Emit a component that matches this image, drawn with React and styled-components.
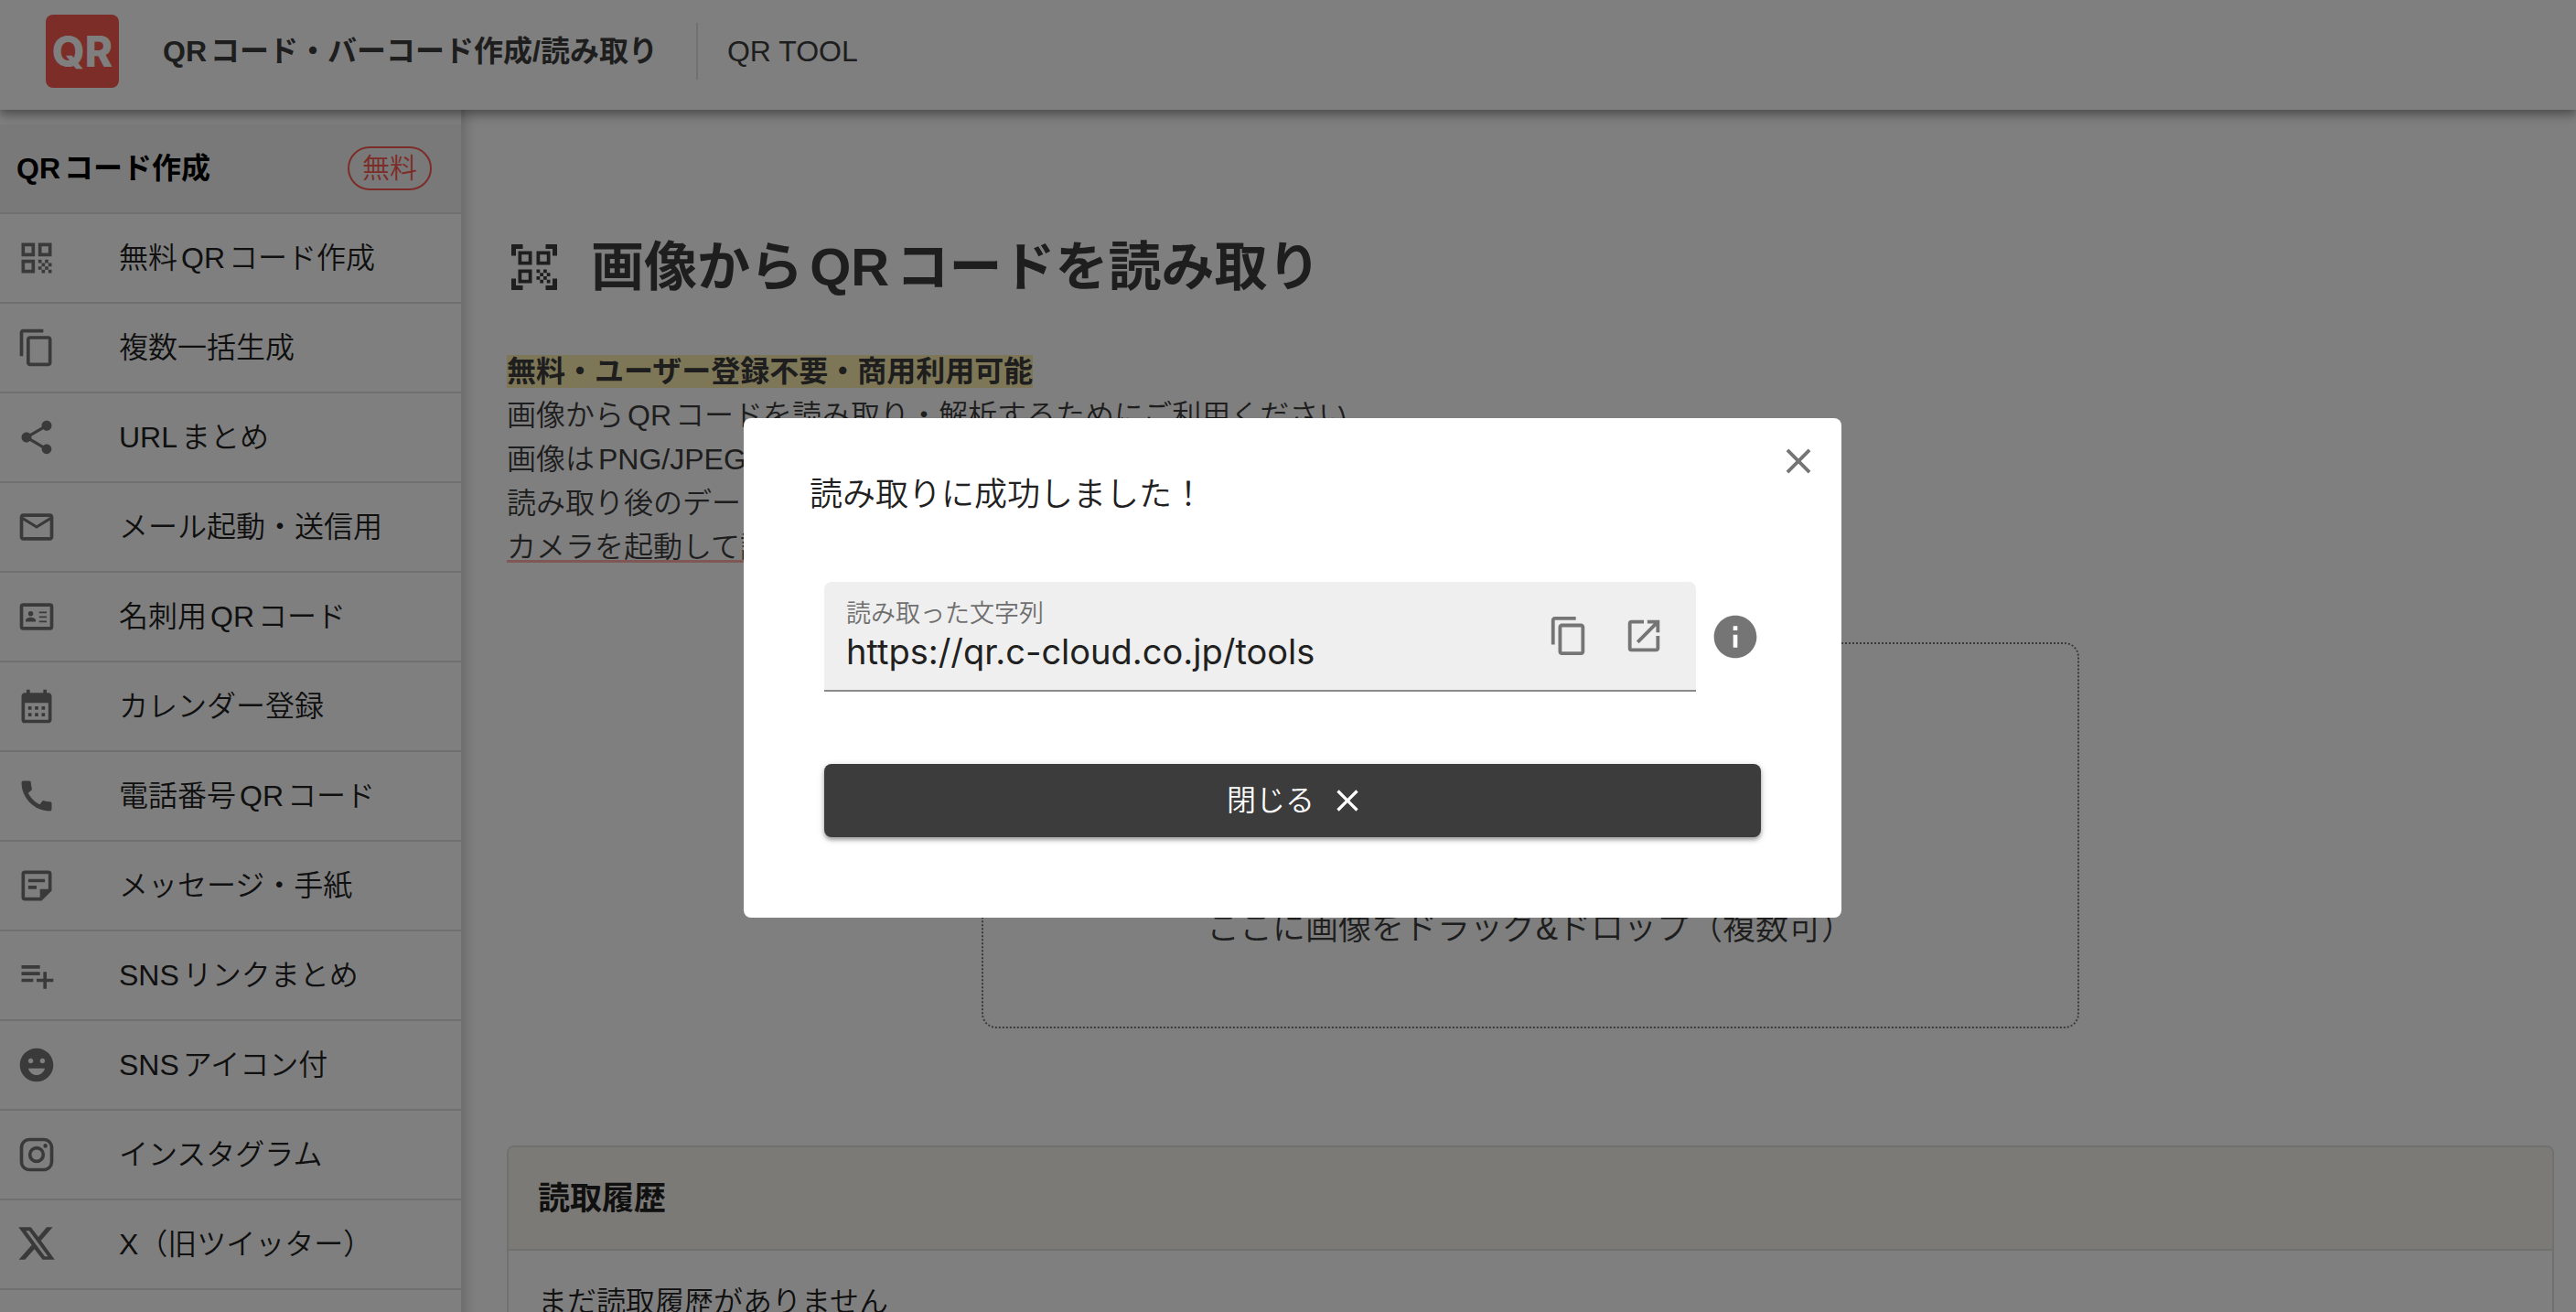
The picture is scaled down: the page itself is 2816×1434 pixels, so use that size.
import { useState } from 'react';
import styled, { createGlobalStyle } from 'styled-components';
import {
  MdCalendarMonth,
  MdCall,
  MdClose,
  MdContentCopy,
  MdEmojiEmotions,
  MdInfo,
  MdMailOutline,
  MdOpenInNew,
  MdPlaylistAdd,
  MdQrCode,
  MdQrCodeScanner,
  MdShare,
} from 'react-icons/md';

const colors = {
  text: '#3c3c3c',
  strong: '#212121',
  icon: '#757575',
  border: '#e0e0e0',
  red: '#fa5a50',
};

const GlobalStyle = createGlobalStyle`
  *, *::before, *::after {
    box-sizing: border-box;
  }

  body {
    margin: 0;
    overflow: hidden;
    background: #fff;
    color: ${colors.text};
    font-family: 'Liberation Sans', 'Noto Sans CJK JP', sans-serif;
    font-size: 32px;
    font-weight: 350;
    line-height: 48px;
    text-autospace: normal;
  }

  button, input {
    font: inherit;
    color: inherit;
  }
`;

const Header = styled.header`
  position: relative;
  z-index: 2;
  display: flex;
  align-items: center;
  height: 120px;
  padding: 0 50px 8px;
  background: #fff;
  box-shadow: 0 4px 8px rgba(0, 0, 0, 0.2), 0 8px 10px rgba(0, 0, 0, 0.14), 0 2px 20px rgba(0, 0, 0, 0.12);
`;

const Logo = styled.a`
  display: flex;
  align-items: center;
  justify-content: center;
  width: 80px;
  height: 80px;
  margin-right: 48px;
  border-radius: 8px;
  background: ${colors.red};
  color: #fff;
  font-family: Inter, sans-serif;
  font-size: 46px;
  font-weight: 800;
  text-decoration: none;
`;

const SiteName = styled.span`
  font-weight: 600;
`;

const SiteSub = styled.span`
  margin-left: 42px;
  padding-left: 32px;
  border-left: 2px solid ${colors.border};
  line-height: 62px;
`;

const Layout = styled.div`
  display: flex;
  align-items: stretch;
`;

const Sidebar = styled.nav`
  position: relative;
  flex: 0 0 508px;
  padding-top: 16px;
  border-right: 4px solid ${colors.border};
  color: ${colors.strong};
  box-shadow: 2px 0 12px rgba(0, 0, 0, 0.16);
`;

const SidebarHeading = styled.div`
  display: flex;
  align-items: center;
  justify-content: space-between;
  height: 98px;
  padding: 0 32px 0 18px;
  border-bottom: 2px solid ${colors.border};
  background: #f3f3f3;
  color: #000;
  font-weight: 600;
`;

const Chip = styled.span`
  padding: 0 14px;
  border: 2px solid ${colors.red};
  border-radius: 24px;
  color: ${colors.red};
  font-size: 30px;
  font-weight: 350;
  line-height: 44px;
`;

const Menu = styled.ul`
  margin: 0;
  padding: 0;
  list-style: none;
`;

const MenuLink = styled.a`
  display: flex;
  align-items: center;
  gap: 68px;
  height: 98px;
  padding: 0 18px;
  border-bottom: 2px solid ${colors.border};
  color: inherit;
  text-decoration: none;

  svg {
    flex: none;
    width: 44px;
    height: 44px;
    color: ${colors.icon};
  }
`;

const Main = styled.main`
  flex: 1;
  min-width: 0;
  padding: 130px 24px 48px 46px;
`;

const Title = styled.h1`
  display: flex;
  align-items: center;
  gap: 32px;
  margin: 0 0 48px;
  font-size: 58px;
  font-weight: 600;
  line-height: 84px;

  svg {
    flex: none;
    width: 60px;
    height: 60px;
  }
`;

const Lead = styled.p`
  margin: 0;
`;

const Highlight = styled.strong`
  background: #fbeeb0;
  font-weight: 600;
`;

const CameraLink = styled.a`
  color: inherit;
  text-decoration: underline 3px #ffb0ac;
  text-underline-offset: 3px;
`;

const DropZone = styled.label`
  display: flex;
  align-items: flex-end;
  justify-content: center;
  width: 100%;
  max-width: 1200px;
  min-height: 422px;
  margin: 80px auto 128px;
  padding-bottom: 80px;
  border: 2px dotted ${colors.icon};
  border-radius: 16px;
  font-size: 36px;
  line-height: 54px;

  input {
    display: none;
  }
`;

const Card = styled.section`
  border: 2px solid ${colors.border};
  border-radius: 8px;
  color: ${colors.strong};
`;

const CardTitle = styled.h2`
  margin: 0;
  padding: 29px 32px;
  border-bottom: 2px solid ${colors.border};
  border-radius: 6px 6px 0 0;
  background: #f9f5ee;
  font-size: 35px;
  font-weight: 600;
  line-height: 53px;
`;

const CardBody = styled.p`
  margin: 0;
  padding: 32px;
`;

const Overlay = styled.div`
  position: fixed;
  inset: 0;
  z-index: 10;
  display: flex;
  align-items: center;
  justify-content: center;
  padding: 26px 0 0 10px;
  background: rgba(0, 0, 0, 0.5);
`;

const Dialog = styled.section`
  width: 1200px;
  max-width: 100%;
  padding: 24px 24px 88px;
  border-radius: 8px;
  background: #fff;
  color: ${colors.strong};
`;

const IconButton = styled.button`
  display: flex;
  flex: none;
  padding: 0;
  border: 0;
  background: none;
  color: ${colors.icon};
  cursor: pointer;

  svg {
    width: ${({ $size }) => $size || 46}px;
    height: ${({ $size }) => $size || 46}px;
  }
`;

const DialogTop = styled.div`
  display: flex;
  align-items: flex-start;
  justify-content: space-between;
`;

const DialogTitle = styled.h2`
  margin: 0;
  padding: 33px 0 0 48px;
  font-size: 36px;
  font-weight: 350;
  line-height: 54px;
`;

const DialogBody = styled.div`
  margin: 68px 64px 0;
`;

const FieldRow = styled.div`
  display: flex;
  align-items: center;
  gap: 15px;
  margin-bottom: 79px;
`;

const Field = styled.div`
  display: flex;
  flex: 1;
  align-items: center;
  gap: 36px;
  min-width: 0;
  height: 120px;
  padding: 0 34px 0 24px;
  border-bottom: 2px solid #8a8a8a;
  border-radius: 8px 8px 0 0;
  background: #efefef;
`;

const FieldText = styled.div`
  display: flex;
  flex: 1;
  flex-direction: column;
  min-width: 0;

  label {
    color: #6f6f6f;
    font-size: 27px;
    line-height: 34px;
  }

  input {
    width: 100%;
    height: 48px;
    padding: 0;
    border: 0;
    outline: 0;
    background: none;
    font-family: Inter, sans-serif;
    font-size: 38px;
    font-weight: 400;
    line-height: 48px;
  }
`;

const CloseButton = styled.button`
  display: flex;
  align-items: center;
  justify-content: center;
  gap: 16px;
  width: 100%;
  height: 80px;
  padding: 0 0 0 8px;
  border: 0;
  border-radius: 8px;
  background: #3c3c3c;
  color: #fff;
  box-shadow: 0 3px 4px rgba(0, 0, 0, 0.3), 0 2px 8px rgba(0, 0, 0, 0.16);
  cursor: pointer;

  svg {
    width: 40px;
    height: 40px;
  }
`;

const Svg = styled.svg.attrs({ viewBox: '0 0 24 24', 'aria-hidden': true })`
  fill: currentColor;
`;

const CardIcon = () => (
  <Svg>
    <path
      fillRule="evenodd"
      d="M4 4h16a2 2 0 0 1 2 2v12a2 2 0 0 1-2 2H4a2 2 0 0 1-2-2V6a2 2 0 0 1 2-2zm0 2v12h16V6z"
    />
    <circle cx="8.5" cy="10.2" r="1.5" />
    <path d="M5.5 15v-.8c0-1.2 2-1.8 3-1.8s3 .6 3 1.8v.8zM13.5 9h4.5v1h-4.5zM13.5 11.7h4.5v1h-4.5zM13.5 14.4h4.5v1h-4.5z" />
  </Svg>
);

const NoteIcon = () => (
  <Svg>
    <path
      fillRule="evenodd"
      d="M5 3h14a2 2 0 0 1 2 2v10l-6 6H5a2 2 0 0 1-2-2V5a2 2 0 0 1 2-2zm0 2v14h9v-5h5V5z"
    />
    <path d="M7 8h10v2H7zM7 12h5v2H7z" />
  </Svg>
);

const InstagramIcon = () => (
  <Svg>
    <path d="M7.8 2h8.4C19.4 2 22 4.6 22 7.8v8.4a5.8 5.8 0 0 1-5.8 5.8H7.8C4.6 22 2 19.4 2 16.2V7.8A5.8 5.8 0 0 1 7.8 2m-.2 2A3.6 3.6 0 0 0 4 7.6v8.8C4 18.39 5.61 20 7.6 20h8.8a3.6 3.6 0 0 0 3.6-3.6V7.6C20 5.61 18.39 4 16.4 4H7.6m9.65 1.5a1.25 1.25 0 1 1 0 2.5 1.25 1.25 0 0 1 0-2.5M12 7a5 5 0 1 1 0 10 5 5 0 0 1 0-10m0 2a3 3 0 1 0 0 6 3 3 0 0 0 0-6z" />
  </Svg>
);

const XIcon = () => (
  <Svg>
    <path
      fillRule="evenodd"
      d="M1.2 1.8h7.4l4.5 5.9L18 1.8h3.6l-7 8 8.2 11.4h-7.2l-4.9-6.4-5.6 6.4H1.4l7.7-8.8zM5.6 3.9l11.3 15.3h1.9L7.6 3.9z"
    />
  </Svg>
);

const MENU_ITEMS = [
  { label: '無料QRコード作成', Icon: MdQrCode },
  { label: '複数一括生成', Icon: MdContentCopy },
  { label: 'URLまとめ', Icon: MdShare },
  { label: 'メール起動・送信用', Icon: MdMailOutline },
  { label: '名刺用QRコード', Icon: CardIcon },
  { label: 'カレンダー登録', Icon: MdCalendarMonth },
  { label: '電話番号QRコード', Icon: MdCall },
  { label: 'メッセージ・手紙', Icon: NoteIcon },
  { label: 'SNSリンクまとめ', Icon: MdPlaylistAdd },
  { label: 'SNSアイコン付', Icon: MdEmojiEmotions },
  { label: 'インスタグラム', Icon: InstagramIcon },
  { label: 'X（旧ツイッター）', Icon: XIcon },
];

const ResultDialog = ({ onClose }) => (
  <Overlay>
    <Dialog role="dialog" aria-modal="true" aria-labelledby="result-title">
      <DialogTop>
        <DialogTitle id="result-title">読み取りに成功しました！</DialogTitle>
        <IconButton type="button" aria-label="閉じる" onClick={onClose}>
          <MdClose />
        </IconButton>
      </DialogTop>
      <DialogBody>
        <FieldRow>
          <Field>
            <FieldText>
              <label htmlFor="result-text">読み取った文字列</label>
              <input id="result-text" type="text" readOnly value="https://qr.c-cloud.co.jp/tools" />
            </FieldText>
            <IconButton type="button" aria-label="コピー">
              <MdContentCopy />
            </IconButton>
            <IconButton type="button" aria-label="開く">
              <MdOpenInNew />
            </IconButton>
          </Field>
          <IconButton type="button" aria-label="情報" $size={56}>
            <MdInfo />
          </IconButton>
        </FieldRow>
        <CloseButton type="button" onClick={onClose}>
          閉じる
          <MdClose />
        </CloseButton>
      </DialogBody>
    </Dialog>
  </Overlay>
);

const App = () => {
  const [open, setOpen] = useState(true);
  return (
    <>
      <GlobalStyle />
      <Header>
        <Logo href="#top">QR</Logo>
        <SiteName>QRコード・バーコード作成/読み取り</SiteName>
        <SiteSub>QR TOOL</SiteSub>
      </Header>
      <Layout>
        <Sidebar>
          <SidebarHeading>
            QRコード作成
            <Chip>無料</Chip>
          </SidebarHeading>
          <Menu>
            {MENU_ITEMS.map(({ label, Icon }) => (
              <li key={label}>
                <MenuLink href="#menu">
                  <Icon />
                  {label}
                </MenuLink>
              </li>
            ))}
          </Menu>
        </Sidebar>
        <Main>
          <Title>
            <MdQrCodeScanner />
            画像からQRコードを読み取り
          </Title>
          <Lead>
            <Highlight>無料・ユーザー登録不要・商用利用可能</Highlight>
            <br />
            画像からQRコードを読み取り・解析するためにご利用ください。
            <br />
            画像はPNG/JPEG/
            <br />
            読み取り後のデータ
            <br />
            <CameraLink href="#camera">カメラを起動して読み取り</CameraLink>
          </Lead>
          <DropZone>
            <input type="file" multiple />
            ここに画像をドラッグ&ドロップ（複数可）
          </DropZone>
          <Card>
            <CardTitle>読取履歴</CardTitle>
            <CardBody>まだ読取履歴がありません</CardBody>
          </Card>
        </Main>
      </Layout>
      {open && <ResultDialog onClose={() => setOpen(false)} />}
    </>
  );
};

export default App;
